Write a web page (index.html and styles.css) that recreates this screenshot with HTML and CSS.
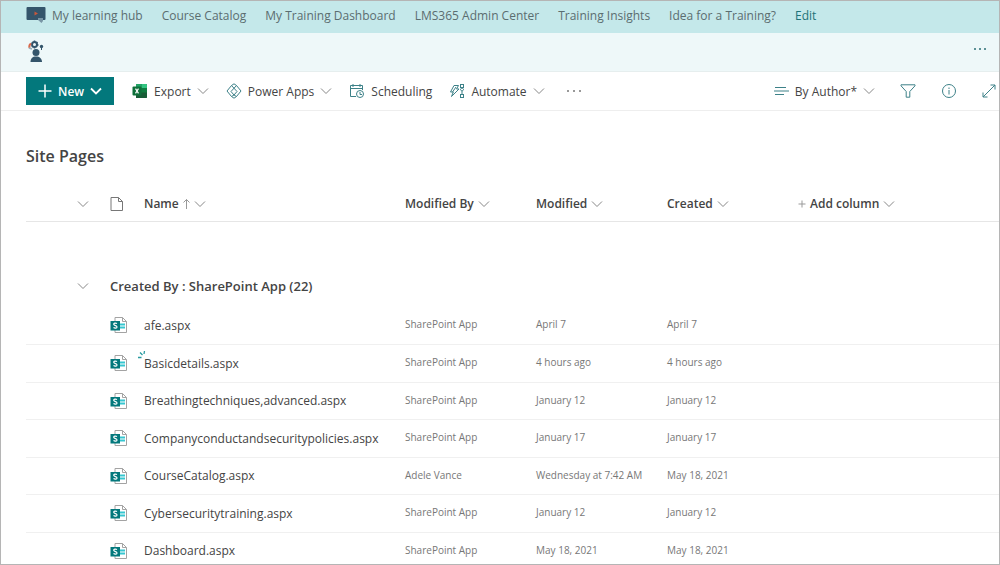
FILE: index.html
```html
<!DOCTYPE html>
<html lang="en">
<head>
  <meta charset="UTF-8">
  <meta name="viewport" content="width=device-width, initial-scale=1">
  <title>Site Pages</title>
  <link rel="stylesheet" href="styles.css">
</head>
<body>

<!-- shared icons -->
<svg class="sprite" aria-hidden="true">
  <symbol id="chevron" viewBox="0 0 12 8">
    <path d="M1 1.5l5 5 5-5" fill="none" stroke="currentColor"/>
  </symbol>
  <symbol id="page-icon" viewBox="0 0 18 18">
    <path d="M5 1.5h7.5l4 4v11H5z" fill="#fff" stroke="#a3a3a3"/>
    <path d="M12.5 1.5v4h4" fill="none" stroke="#a3a3a3"/>
    <path d="M10 7.5h5v2h-5zM10 10.5h5v2h-5z" fill="#37c6d0"/>
    <rect x="0.5" y="5" width="9.5" height="9.5" fill="#03787c"/>
    <path d="M7 7.6c-1.3-.8-3.3-.6-3.3.7 0 1.6 3.3 1 3.3 2.6 0 1.5-2.2 1.5-3.5.7" fill="none" stroke="#fff" stroke-width="1.2"/>
  </symbol>
</svg>

<div class="page">
  <nav class="hub">
    <a class="hub-home" href="#">
      <svg width="20" height="16" viewBox="0 0 20 16">
        <rect x="0.5" width="19" height="13" rx="1" fill="#34556b"/>
        <path d="M8.5 4.5l3.5 2-3.5 2z" fill="#c8583c"/>
        <path d="M12 11h5v3l-1.5 2L12 13z" fill="#7895a5"/>
      </svg>
      My learning hub
    </a>
    <a href="#">Course Catalog</a>
    <a href="#">My Training Dashboard</a>
    <a href="#">LMS365 Admin Center</a>
    <a href="#">Training Insights</a>
    <a href="#">Idea for a Training?</a>
    <a class="edit" href="#">Edit</a>
  </nav>

  <header class="site">
    <a href="#" aria-label="Site home">
      <svg width="20" height="24" viewBox="0 0 20 24">
        <circle cx="10" cy="12.5" r="3.5" fill="#34556b"/>
        <path d="M4.5 22c0-3.5 2-5.5 5.5-5.5s6 2 6 5.5z" fill="#34556b"/>
        <circle cx="8.5" cy="4.5" r="2.5" fill="none" stroke="#34556b" stroke-width="2"/>
        <path d="M8.5 .5v2M11.5 2l-1 1M12.5 5h-2M8.5 8.5V7" stroke="#34556b" stroke-width="1.5"/>
        <path d="M5 3.5C3.5 4.5 3 6 3.5 8" fill="none" stroke="#d9694b" stroke-width="2"/>
        <path d="M3 8l3 1" stroke="#9bb0ba" stroke-width="1.5"/>
        <circle cx="15.500" cy="6.5" r="1.7" fill="#34556b"/>
        <path d="M15.5 7v3" stroke="#34556b"/>
      </svg>
    </a>
    <button class="more" aria-label="More">
      <svg width="14" height="4" viewBox="0 0 14 4" fill="#2c6f75"><circle cx="2" cy="2" r="1"/><circle cx="7" cy="2" r="1"/><circle cx="12" cy="2" r="1"/></svg>
    </button>
  </header>

  <div class="commands">
    <button class="new">
      <svg width="14" height="14" viewBox="0 0 14 14" fill="none" stroke="#fff" stroke-width="1.5"><path d="M7 .5v13M.5 7h13"/></svg>
      New
      <svg class="chev" width="12" height="8" stroke-width="1.8"><use href="#chevron"/></svg>
    </button>
    <button class="cmd">
      <svg width="16" height="16" viewBox="0 0 16 16">
        <rect x="4" y="1" width="11" height="14" rx="1" fill="#107c41"/>
        <path d="M9.5 1H14a1 1 0 0 1 1 1v3H9.5z" fill="#33c481"/>
        <path d="M4 5h5.5V1H5a1 1 0 0 0-1 1z" fill="#21a366"/>
        <path d="M9.5 9.5H15V14a1 1 0 0 1-1 1H4V9.5z" fill="#185c37"/>
        <rect x="0.5" y="3.5" width="9" height="9" rx="1" fill="#0f703b"/>
        <path d="M3.5 5.7l3 4.6M6.5 5.7l-3 4.6" stroke="#fff" stroke-width="1.2"/>
      </svg>
      Export
      <svg class="chev" width="12" height="8"><use href="#chevron"/></svg>
    </button>
    <button class="cmd">
      <svg width="16" height="16" viewBox="0 0 16 16" fill="none" stroke="#3d8188">
        <path d="M5.5 2.5L1 8l4.5 5.5L8 15.2l2.5-1.7L15 8l-4.500-5.500L8 .8z"/>
        <path d="M5.500 2.500L11 8.500l-3 3.500-3-3.500 5.500-6M8 12l2.500 1.500M8 12l-2.500 1.500"/>
      </svg>
      Power Apps
      <svg class="chev" width="12" height="8"><use href="#chevron"/></svg>
    </button>
    <button class="cmd">
      <svg width="16" height="16" viewBox="0 0 16 16" fill="none" stroke="#3d8188">
        <path d="M7 13.5H1.5v-11h12V7M1.5 5.5h12M4 1v3M11 1v3"/>
        <circle cx="11" cy="11" r="3.5"/><path d="M11 9v2.5h2"/>
      </svg>
      Scheduling
    </button>
    <button class="cmd">
      <svg width="16" height="16" viewBox="0 0 16 16" fill="none" stroke="#3d8188">
        <path d="M5 2.5h4.5L7.5 6H10l-7.5 7.500L4.3 9H1.5zM7 4L3.5 9"/>
        <rect x="11.5" y="1.5" width="3" height="3"/><rect x="11.5" y="11.5" width="3" height="3"/>
        <path d="M13 4.5l1.5 2-1.5 2-1.5-2zM13 8.5v3"/>
      </svg>
      Automate
      <svg class="chev" width="12" height="8"><use href="#chevron"/></svg>
    </button>
    <button class="cmd overflow" aria-label="More commands">
      <svg width="16" height="4" viewBox="0 0 16 4" fill="#777"><circle cx="2" cy="2" r="1"/><circle cx="8" cy="2" r="1"/><circle cx="14" cy="2" r="1"/></svg>
    </button>

    <div class="views">
      <button class="cmd">
        <svg width="15" height="10" viewBox="0 0 15 10" stroke="#3d8188"><path d="M1 1.5h11M0 5h15M1 8.5h9"/></svg>
        By Author*
        <svg class="chev" width="12" height="8"><use href="#chevron"/></svg>
      </button>
      <button class="cmd" aria-label="Filter">
        <svg width="16" height="14" viewBox="0 0 16 14" fill="none" stroke="#3d8188"><path d="M1 .8h14v1L9.8 7.5v5.7H6.2V7.5L1 1.8z"/></svg>
      </button>
      <button class="cmd" aria-label="Details">
        <svg width="16" height="16" viewBox="0 0 16 16" fill="none" stroke="#3d8188"><circle cx="8" cy="8" r="6.5"/><path d="M8 7v4.5M8 4.5V6"/></svg>
      </button>
      <button class="cmd" aria-label="Expand">
        <svg width="14" height="14" viewBox="0 0 14 14" fill="none" stroke="#3d8188"><path d="M1 13L13 1M8.5 1H13v4.5M1 8.5V13h4.5"/></svg>
      </button>
    </div>
  </div>

  <main class="list">
    <h1>Site Pages</h1>
    <table>
      <colgroup>
        <col class="c-toggle"><col class="c-icon"><col class="c-name">
        <col class="c-meta"><col class="c-meta"><col class="c-meta"><col>
      </colgroup>
      <thead>
        <tr>
          <th><button class="toggle" aria-label="Collapse all"><svg class="chev" width="12" height="8"><use href="#chevron"/></svg></button></th>
          <th>
            <svg class="file" width="14" height="16" viewBox="0 0 14 16" fill="none" stroke="#777"><path d="M1 1.5h7.5l4 4v9H1zM8.5 1.5v4h4"/></svg>
          </th>
          <th>
            <button>Name
              <svg width="7" height="12" viewBox="0 0 7 12" fill="none" stroke="#999"><path d="M3.5 11V1.500M.5 4.5l3-3 3 3"/></svg>
              <svg class="chev" width="12" height="8"><use href="#chevron"/></svg>
            </button>
          </th>
          <th><button>Modified By <svg class="chev" width="12" height="8"><use href="#chevron"/></svg></button></th>
          <th><button>Modified <svg class="chev" width="12" height="8"><use href="#chevron"/></svg></button></th>
          <th><button>Created <svg class="chev" width="12" height="8"><use href="#chevron"/></svg></button></th>
          <th>
            <button>
              <svg width="8" height="8" viewBox="0 0 8 8" stroke="#999"><path d="M4 .5v7M.5 4h7"/></svg>
              Add column
              <svg class="chev" width="12" height="8"><use href="#chevron"/></svg>
            </button>
          </th>
        </tr>
      </thead>
      <tbody class="group">
        <tr>
          <td><button class="toggle" aria-label="Collapse group"><svg class="chev" width="12" height="8"><use href="#chevron"/></svg></button></td>
          <td colspan="6">Created By : SharePoint App (22)</td>
        </tr>
      </tbody>
      <tbody class="items">
        <tr>
          <td></td>
          <td><svg class="doc" width="18" height="18"><use href="#page-icon"/></svg></td>
          <td><a href="#">afe.aspx</a></td>
          <td>SharePoint App</td><td>April 7</td><td>April 7</td><td></td>
        </tr>
        <tr>
          <td></td>
          <td><svg class="doc" width="18" height="18"><use href="#page-icon"/></svg></td>
          <td>
            <a href="#">Basicdetails.aspx
              <svg class="fresh" width="8" height="8" viewBox="0 0 8 8" fill="none" stroke="#2a9ba0"><path d="M6.5 0L6 3M2 1.5L4.5 4M0 6.5h3.5" stroke-width="1.3"/></svg>
            </a>
          </td>
          <td>SharePoint App</td><td>4 hours ago</td><td>4 hours ago</td><td></td>
        </tr>
        <tr>
          <td></td>
          <td><svg class="doc" width="18" height="18"><use href="#page-icon"/></svg></td>
          <td><a href="#">Breathingtechniques,advanced.aspx</a></td>
          <td>SharePoint App</td><td>January 12</td><td>January 12</td><td></td>
        </tr>
        <tr>
          <td></td>
          <td><svg class="doc" width="18" height="18"><use href="#page-icon"/></svg></td>
          <td><a href="#">Companyconductandsecuritypolicies.aspx</a></td>
          <td>SharePoint App</td><td>January 17</td><td>January 17</td><td></td>
        </tr>
        <tr>
          <td></td>
          <td><svg class="doc" width="18" height="18"><use href="#page-icon"/></svg></td>
          <td><a href="#">CourseCatalog.aspx</a></td>
          <td>Adele Vance</td><td>Wednesday at 7:42 AM</td><td>May 18, 2021</td><td></td>
        </tr>
        <tr>
          <td></td>
          <td><svg class="doc" width="18" height="18"><use href="#page-icon"/></svg></td>
          <td><a href="#">Cybersecuritytraining.aspx</a></td>
          <td>SharePoint App</td><td>January 12</td><td>January 12</td><td></td>
        </tr>
        <tr>
          <td></td>
          <td><svg class="doc" width="18" height="18"><use href="#page-icon"/></svg></td>
          <td><a href="#">Dashboard.aspx</a></td>
          <td>SharePoint App</td><td>May 18, 2021</td><td>May 18, 2021</td><td></td>
        </tr>
      </tbody>
    </table>
  </main>
</div>

</body>
</html>
```
FILE: styles.css
```css
* { box-sizing: border-box; }
body {
  margin: 0;
  font-family: "Open Sans", "Noto Sans", sans-serif;
  font-size: 12px;
  color: #444;
  background: #fff;
}
a { color: inherit; text-decoration: none; }
button {
  display: flex; align-items: center;
  padding: 0; border: 0; background: none;
  font: inherit; color: inherit;
  white-space: nowrap; cursor: pointer;
}
svg { flex: none; }
.sprite { position: absolute; width: 0; height: 0; }
.chev { color: #888; }

.page {
  display: flex; flex-direction: column;
  height: 100vh;
  border: 1px solid #b5b5b5;
}

/* hub navigation */
.hub {
  display: flex; align-items: center; gap: 19px;
  height: 32px; flex: none;
  padding: 0 25px 4px;
  background: #c4e8ea;
  color: #5b6d70;
  white-space: nowrap;
}
.hub-home { display: flex; align-items: center; gap: 6px; }
.hub .edit { color: #1f7379; }

/* site header */
.site {
  display: flex; align-items: center; justify-content: space-between;
  height: 39px; flex: none;
  padding: 0 12px 0 25px;
  background: #eef8f9;
  border-bottom: 1px solid #e6eeee;
}
.site a { display: flex; }
.site .more { padding-bottom: 6px; }

/* command bar */
.commands {
  display: flex; align-items: center;
  height: 39px; flex: none;
  padding: 0 3px 0 25px;
  border-bottom: 1px solid #eee;
}
.new {
  gap: 6px;
  height: 28px;
  padding: 0 12px;
  margin-right: 18px;
  background: #03787c;
  color: #fff;
  font-weight: 600;
}
.new .chev { color: #fff; }
.cmd { gap: 6px; margin-right: 17px; }
.overflow { padding: 0 4px; }
.views { display: flex; align-items: center; gap: 25px; margin-left: auto; }
.views .cmd { margin: 0; }

/* list */
.list { flex: 1; min-height: 0; overflow: hidden; padding-left: 25px; }
h1 {
  margin: 33px 0 17px;
  font-size: 16px; line-height: 24px; font-weight: 600;
}
table { width: 100%; table-layout: fixed; border-collapse: collapse; }
.c-toggle { width: 84px; }
.c-icon { width: 34px; }
.c-name { width: 261px; }
.c-meta { width: 131px; }
th, td { padding: 0; text-align: left; white-space: nowrap; }
th {
  height: 36px;
  padding-top: 2px;
  border-bottom: 1px solid #e6e6e6;
  font-weight: 600;
}
th button { gap: 4px; }
.toggle { margin-left: 51px; }
.file, .doc { display: block; }
.group td {
  height: 86px;
  padding-top: 44px;
  font-size: 13px; font-weight: 600;
}
.items td {
  height: 37px;
  padding-bottom: 2px;
  border-bottom: 1px solid #f0f0f0;
  font-size: 10px;
  color: #777;
}
.items tr:nth-child(even) td { height: 38px; }
.items td:nth-child(-n+3) { padding-bottom: 0; }
.items a { position: relative; font-size: 12px; color: #444; }
.fresh { position: absolute; left: -6px; top: -4px; }
```
